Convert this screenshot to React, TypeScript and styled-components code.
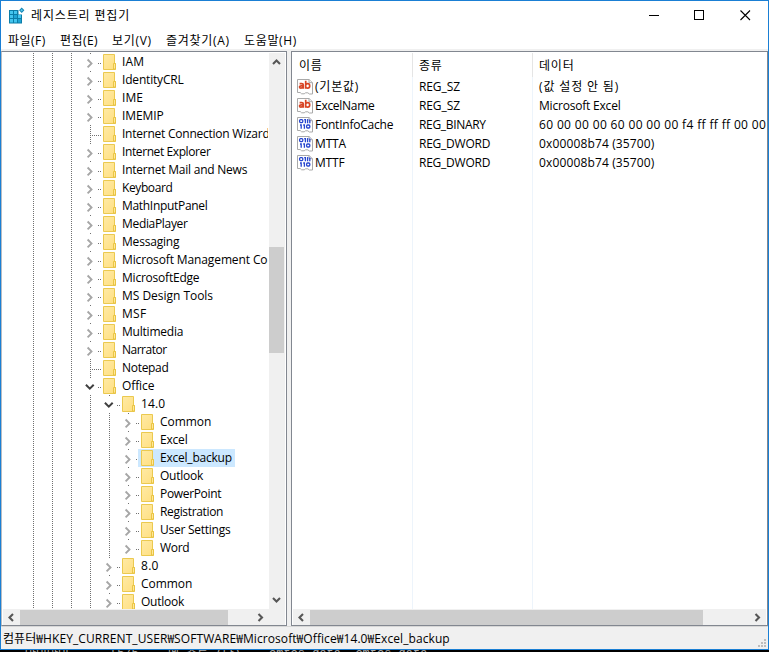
import React from 'react';
import styled, { createGlobalStyle, css } from 'styled-components';

const Global = createGlobalStyle`
  * { box-sizing: border-box; }
  html, body { margin: 0; padding: 0; background: #000; overflow: hidden; }
  body { font: 12px/18px "Open Sans", "Noto Sans CJK KR", sans-serif; color: #000; }
  svg { display: block; flex: none; overflow: visible; }
`;

const Screen = styled.div`
  width: 769px;
  height: 652px;
  display: flex;
  flex-direction: column;
  background: #000;
`;

const Window = styled.div`
  height: 650px;
  flex: none;
  display: flex;
  flex-direction: column;
  background: #f0f0f0;
  border: 1px solid #1a7fd4;
`;

const TitleBar = styled.header`
  height: 29px;
  flex: none;
  display: flex;
  align-items: center;
  background: #fff;
  padding-left: 8px;
`;

const Title = styled.h1`
  margin: 0 auto 0 6px;
  font-size: 12px;
  font-weight: 400;
  letter-spacing: 0.85px;
  white-space: nowrap;
`;

const CaptionButton = styled.div`
  width: 45.5px;
  height: 29px;
  display: flex;
  align-items: center;
  justify-content: center;
`;

const MenuBar = styled.nav`
  height: 19px;
  flex: none;
  display: flex;
  background: #fff;
  padding-left: 7px;
`;

const MenuItem = styled.span<{ $width: number; $track: number }>`
  width: ${p => p.$width}px;
  line-height: 22px;
  letter-spacing: ${p => p.$track}px;
  white-space: nowrap;
`;

const Panes = styled.main`
  height: 577px;
  flex: none;
  display: flex;
  gap: 4px;
  padding-top: 2px;
`;

const paneFrame = css`
  height: 575px;
  background: #fff;
  border: 1px solid #828790;
  padding: 1px;
  display: flex;
  flex-direction: column;
`;

const TreePane = styled.section`
  ${paneFrame}
  width: 286px;
  flex: none;
  border-left-color: #b8bcc2;
`;

const ListPane = styled.section`
  ${paneFrame}
  flex: 1;
  min-width: 0;
`;

const TreeBody = styled.div`
  height: 556px;
  flex: none;
  display: flex;
`;

const TreeRows = styled.div`
  flex: 1;
  min-width: 0;
  overflow: hidden;
  margin-right: 1px;
  padding-left: 21px;
`;

const TreeRow = styled.div`
  height: 18px;
  display: flex;
`;

const Guide = styled.span`
  width: 19px;
  height: 18px;
  flex: none;
  background: repeating-linear-gradient(to bottom, #707070 0 1px, transparent 1px 2px) 9px 0 / 1px 18px no-repeat;
`;

const NodeFace = styled.span<{ $selected?: boolean }>`
  height: 18px;
  display: flex;
  align-items: center;
  padding: 0 3px;
  gap: 6px;
  background: ${p => (p.$selected ? '#cce8ff' : 'transparent')};
`;

const Label = styled.span<{ $track?: number }>`
  letter-spacing: ${p => p.$track ?? 0}px;
  white-space: nowrap;
`;

const VerticalBar = styled.div`
  width: 16px;
  flex: none;
  background: #f0f0f0;
  display: grid;
  grid-template-rows: 19px 1fr 19px;
  justify-items: center;
  align-items: center;
  padding-right: 1px;
`;

const VerticalTrack = styled.div`
  align-self: stretch;
  justify-self: stretch;
  padding-top: 175px;
`;

const Thumb = styled.div<{ $w: number; $h: number }>`
  width: ${p => p.$w}px;
  height: ${p => p.$h}px;
  background: #cdcdcd;
`;

const HorizontalBar = styled.div`
  height: 16px;
  flex: none;
  background: #f0f0f0;
  display: flex;
  align-items: center;
`;

const ArrowCell = styled.div`
  width: 17px;
  height: 15px;
  flex: none;
  display: flex;
  align-items: center;
  justify-content: center;
`;

const Spacer = styled.div<{ $w?: number }>`
  ${p => (p.$w === undefined ? 'flex: 1;' : `width: ${p.$w}px;`)}
`;

const ListBody = styled.div`
  height: 556px;
  flex: none;
  background:
    linear-gradient(#edf4fb, #edf4fb) 119px 0 / 1px 100% no-repeat,
    linear-gradient(#edf4fb, #edf4fb) 239px 0 / 1px 100% no-repeat;
`;

const ListRow = styled.div<{ $header?: boolean }>`
  height: ${p => (p.$header ? 24 : 19)}px;
  line-height: 19px;
  display: grid;
  grid-template-columns: 120px 120px minmax(0, 1fr);
`;

const Cell = styled.div<{ $header?: boolean; $lead?: boolean }>`
  display: flex;
  align-items: ${p => (p.$header ? 'center' : 'flex-start')};
  gap: 2px;
  padding-left: ${p => (p.$lead ? 4 : 6)}px;
  min-width: 0;
  overflow: hidden;
  ${p => p.$header && 'border-right: 1px solid #e5e5e5;'}
  &:last-child { border-right: 0; }
  > svg { margin-top: 2px; }
`;

const StatusBar = styled.footer`
  flex: 1;
  display: flex;
  align-items: center;
  justify-content: space-between;
  border-top: 1px solid #d7d7d7;
  padding: 1px 2px 0 2px;
`;

const GripHolder = styled.div`
  align-self: flex-end;
  padding-bottom: 2px;
`;

const Backdrop = styled.div`
  height: 2px;
  flex: none;
  overflow: hidden;
  display: flex;
  gap: 31px;
  padding-left: 25px;
  color: #a8a8a8;
  font: 12px/12px "Liberation Mono", "Noto Sans CJK KR", monospace;
  white-space: pre;
`;

const BackdropText = styled.span<{ $w: number }>`
  margin-top: -2px;
  width: ${p => p.$w}px;
`;

function RegeditIcon() {
  return (
    <svg width="16" height="16" viewBox="0 0 16 16">
      <path d="M0 2h9.5v4.500H13v9H0z" fill="#0b7da8" />
      <path d="M1 3h3v3H1zM5 3h3v3H5zM1 7h3v3H1zM9 7h3v3H9zM1 11h3v3.500H1zM5 11h3v3.500H5z" fill="#43c5ee" />
      <path d="M5 7h3v3H5zM9 11h3v3.500H9z" fill="#1fa4d4" />
      <path d="M12.700 -.4l2.700 2.700-2.700 2.700L10 2.300z" fill="#1687b5" />
      <path d="M12.700 1l1.300 1.300-1.300 1.300-1.300-1.300z" fill="#58c8ec" />
    </svg>
  );
}

type NodeKind = 'closed' | 'open' | 'leaf';

function Connector({ kind }: { kind: NodeKind }) {
  return (
    <svg width="19" height="18" shapeRendering="crispEdges">
      {kind === 'leaf' ? (
        <>
          <path d="M9.5 0v18" stroke="#707070" strokeDasharray="1 1" />
          <path d="M11 10.5h9" stroke="#707070" strokeDasharray="1 1" />
        </>
      ) : (
        <>
          <path d="M9 0h1v1H9zM17 10h1v1h-1zM19 10h1v1h-1z" fill="#707070" />
          {kind === 'closed' ? (
            <path d="M6.600 6.500l3.900 3.900-3.900 3.900" fill="none" stroke="#a6a6a6" strokeWidth="1.9" shapeRendering="auto" />
          ) : (
            <path d="M4.900 7.800l3.900 3.900 3.900-3.900" fill="none" stroke="#404040" strokeWidth="2" shapeRendering="auto" />
          )}
        </>
      )}
    </svg>
  );
}

function FolderIcon() {
  return (
    <svg width="13" height="16" viewBox="0 0 13 16">
      <defs>
        <linearGradient id="folder" x1="0" y1="0" x2="1" y2="1">
          <stop offset="0" stopColor="#ffeaa5" />
          <stop offset="1" stopColor="#ffdf80" />
        </linearGradient>
      </defs>
      <path d="M.5 .5h11v9h1v6H.5z" fill="url(#folder)" stroke="#ebc94f" />
      <path d="M10.500 15V9.500h2V15z" fill="#ffe79b" stroke="#e8c23c" strokeWidth=".9" />
    </svg>
  );
}

function Arrow({ dir }: { dir: 'up' | 'down' | 'left' | 'right' }) {
  const d = {
    up: 'M1 6l3.5-3.5L8 6',
    down: 'M1 3l3.5 3.5L8 3',
    left: 'M6 1L2.5 4.5 6 8',
    right: 'M2.5 1L6 4.5 2.500 8',
  }[dir];
  return (
    <svg width="9" height="9" viewBox="0 0 9 9">
      <path d={d} fill="none" stroke="#565656" strokeWidth="2.1" />
    </svg>
  );
}

function ValueIcon({ type }: { type: 'string' | 'binary' }) {
  return (
    <svg width="16" height="16" viewBox="0 0 16 16">
      <path d="M.5 .5h11.500l3.500 3.200v11.300h-3.200l-1.400-1.200H8.600l-1.400 1H4.600l-1.400-1.300H.5z" fill="#fff" stroke="#a9a9a9" />
      <path d="M12 .5v3.200h3.500" fill="#eee" stroke="#a9a9a9" />
      {type === 'string' ? (
        <g fill="none" stroke="#d84424" strokeWidth="1.7">
          <path d="M2.600 4.700h2.200q1.500 0 1.500 1.400v3.600M6.300 6.900H4.200q-1.700 0-1.700 1.100t1.400 1.100q1.400 0 2.400-.9" />
          <path d="M8.700 1.700v8M8.700 5.600q.8-.9 2-.9 2 0 2 2.200t-2 2.200q-1.200 0-2-.9" />
        </g>
      ) : (
        <g fill="none" stroke="#2746cf" strokeWidth="1.3">
          <rect x="2.600" y="2.600" width="3.200" height="3" rx="1" />
          <path d="M7.200 2.600h1.200V6.300M10.200 2.600h.4V6.300M12.800 2.600V6.300" />
          <path d="M3 8h1.200v3.700M6.200 8h1.200v3.700" />
          <rect x="9.600" y="8" width="3.200" height="3" rx="1" />
        </g>
      )}
    </svg>
  );
}

function SizeGrip() {
  return (
    <svg width="8" height="8" shapeRendering="crispEdges">
      <path d="M6 0h2v2H6zM3 3h2v2H3zM6 3h2v2H6zM0 6h2v2H0zM3 6h2v2H3zM6 6h2v2H6z" fill="#bdbdbd" />
    </svg>
  );
}

interface TreeNode {
  name: string;
  track: number;
  kind?: NodeKind;
  depth?: number;
  selected?: boolean;
}

const nodes: TreeNode[] = [
  { name: 'IAM', track: 0.2 },
  { name: 'IdentityCRL', track: -0.18 },
  { name: 'IME', track: 0.1 },
  { name: 'IMEMIP', track: -0.1 },
  { name: 'Internet Connection Wizard', track: -0.24, kind: 'leaf' },
  { name: 'Internet Explorer', track: -0.4 },
  { name: 'Internet Mail and News', track: -0.22 },
  { name: 'Keyboard', track: -0.4 },
  { name: 'MathInputPanel', track: -0.31 },
  { name: 'MediaPlayer', track: -0.32 },
  { name: 'Messaging', track: -0.2 },
  { name: 'Microsoft Management Console', track: -0.12 },
  { name: 'MicrosoftEdge', track: -0.22 },
  { name: 'MS Design Tools', track: -0.03 },
  { name: 'MSF', track: 0.3 },
  { name: 'Multimedia', track: -0.22 },
  { name: 'Narrator', track: -0.5 },
  { name: 'Notepad', track: -0.3, kind: 'leaf' },
  { name: 'Office', track: -0.1, kind: 'open' },
  { name: '14.0', track: 0.1, kind: 'open', depth: 4 },
  { name: 'Common', track: -0.05, depth: 5 },
  { name: 'Excel', track: -0.2, depth: 5 },
  { name: 'Excel_backup', track: -0.22, depth: 5, selected: true },
  { name: 'Outlook', track: -0.22, depth: 5 },
  { name: 'PowerPoint', track: -0.33, depth: 5 },
  { name: 'Registration', track: -0.34, depth: 5 },
  { name: 'User Settings', track: -0.26, depth: 5 },
  { name: 'Word', track: -0.3, depth: 5 },
  { name: '8.0', track: 0.3, depth: 4 },
  { name: 'Common', track: -0.05, depth: 4 },
  { name: 'Outlook', track: -0.22, depth: 4 },
];

const menus = [
  { text: '파일(F)', width: 52, track: 0.5 },
  { text: '편집(E)', width: 52, track: 0.45 },
  { text: '보기(V)', width: 54, track: 0.7 },
  { text: '즐겨찾기(A)', width: 78, track: 0.7 },
  { text: '도움말(H)', width: 60, track: 0.65 },
];

type Text = [string, number];
const values: { icon: 'string' | 'binary'; name: Text; type: Text; data: Text }[] = [
  { icon: 'string', name: ['(기본값)', 0.8], type: ['REG_SZ', -0.1], data: ['(값 설정 안 됨)', 0.85] },
  { icon: 'string', name: ['ExcelName', -0.28], type: ['REG_SZ', -0.1], data: ['Microsoft Excel', -0.2] },
  { icon: 'binary', name: ['FontInfoCache', -0.22], type: ['REG_BINARY', -0.32], data: ['60 00 00 00 60 00 00 00 f4 ff ff ff 00 00', 0.35] },
  { icon: 'binary', name: ['MTTA', -0.15], type: ['REG_DWORD', -0.24], data: ['0x00008b74 (35700)', 0.14] },
  { icon: 'binary', name: ['MTTF', -0.2], type: ['REG_DWORD', -0.24], data: ['0x00008b74 (35700)', 0.14] },
];

export default function App() {
  return (
    <Screen>
      <Global />
      <Window>
        <TitleBar>
          <RegeditIcon />
          <Title>레지스트리 편집기</Title>
          <CaptionButton>
            <svg width="11" height="11"><path d="M0 5.5h10" stroke="#000" shapeRendering="crispEdges" /></svg>
          </CaptionButton>
          <CaptionButton>
            <svg width="11" height="11"><path d="M.5 .5h9v9h-9z" fill="none" stroke="#000" shapeRendering="crispEdges" /></svg>
          </CaptionButton>
          <CaptionButton>
            <svg width="11" height="11"><path d="M.5 .5l9.5 9.5M10 .5L.5 10" stroke="#000" strokeWidth="1.1" /></svg>
          </CaptionButton>
        </TitleBar>
        <MenuBar>
          {menus.map(m => (
            <MenuItem key={m.text} $width={m.width} $track={m.track}>{m.text}</MenuItem>
          ))}
        </MenuBar>
        <Panes>
          <TreePane>
            <TreeBody>
              <TreeRows>
                {nodes.map((n, i) => (
                  <TreeRow key={i}>
                    {Array.from({ length: n.depth ?? 3 }, (_, g) => <Guide key={g} />)}
                    <Connector kind={n.kind ?? 'closed'} />
                    <NodeFace $selected={n.selected}>
                      <FolderIcon />
                      <Label $track={n.track}>{n.name}</Label>
                    </NodeFace>
                  </TreeRow>
                ))}
              </TreeRows>
              <VerticalBar>
                <Arrow dir="up" />
                <VerticalTrack><Thumb $w={15} $h={106} /></VerticalTrack>
                <Arrow dir="down" />
              </VerticalBar>
            </TreeBody>
            <HorizontalBar>
              <ArrowCell><Arrow dir="left" /></ArrowCell>
              <Thumb $w={208} $h={15} />
              <Spacer />
              <ArrowCell><Arrow dir="right" /></ArrowCell>
              <Spacer $w={16} />
            </HorizontalBar>
          </TreePane>
          <ListPane>
            <ListBody>
              <ListRow $header>
                <Cell $header><Label $track={0.8}>이름</Label></Cell>
                <Cell $header><Label $track={0.8}>종류</Label></Cell>
                <Cell $header><Label $track={0.8}>데이터</Label></Cell>
              </ListRow>
              {values.map(v => (
                <ListRow key={v.name[0]}>
                  <Cell $lead><ValueIcon type={v.icon} /><Label $track={v.name[1]}>{v.name[0]}</Label></Cell>
                  <Cell><Label $track={v.type[1]}>{v.type[0]}</Label></Cell>
                  <Cell><Label $track={v.data[1]}>{v.data[0]}</Label></Cell>
                </ListRow>
              ))}
            </ListBody>
            <HorizontalBar>
              <ArrowCell><Arrow dir="left" /></ArrowCell>
              <Thumb $w={393} $h={15} />
              <Spacer />
              <ArrowCell><Arrow dir="right" /></ArrowCell>
            </HorizontalBar>
          </ListPane>
        </Panes>
        <StatusBar>
          <Label $track={0.08}>컴퓨터₩HKEY_CURRENT_USER₩SOFTWARE₩Microsoft₩Office₩14.0₩Excel_backup</Label>
          <GripHolder><SizeGrip /></GripHolder>
        </StatusBar>
      </Window>
      <Backdrop>
        <BackdropText $w={54}>아이아이</BackdropText>
        <BackdropText $w={27}>[5/5</BackdropText>
        <BackdropText $w={70}>메 조트 (나)</BackdropText>
        <BackdropText $w={170}>cmtcs_data  cmtcs_data</BackdropText>
      </Backdrop>
    </Screen>
  );
}
